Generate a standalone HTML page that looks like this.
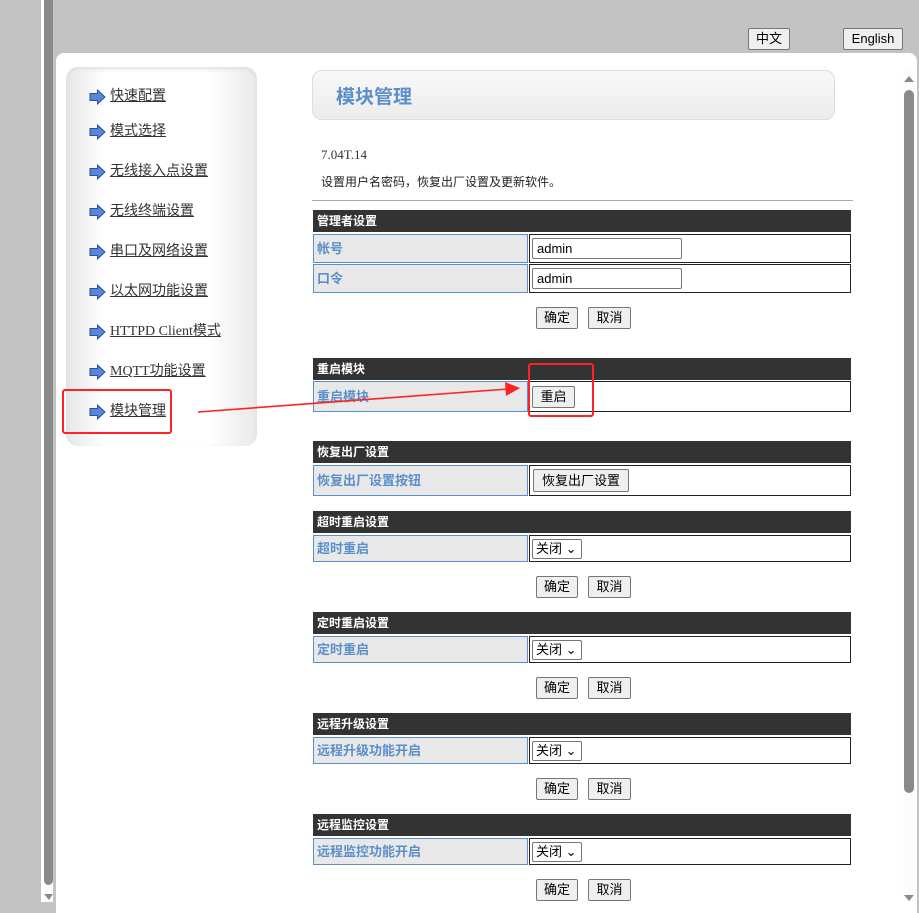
<!DOCTYPE html>
<html><head><meta charset="utf-8"><style>
*{margin:0;padding:0;box-sizing:border-box}
body{width:919px;height:902px;overflow:hidden;position:relative;background:#c3c3c3;font-family:"Liberation Sans","Noto Sans CJK SC",sans-serif;font-size:13px;color:#222}
.a{position:absolute}
.panel{left:56px;top:53px;width:861px;height:860px;background:#fff;border-radius:8px 8px 0 0}
.side{left:66px;top:67px;width:191px;height:379px;border-radius:12px;background:linear-gradient(90deg,#e6e6e6,#fff 20%,#fff 75%,#e9e9e9);box-shadow:inset 0 2px 4px #ddd}
.mi{position:absolute;left:89px;font-family:"Liberation Serif","Noto Sans CJK SC",serif;font-size:14px;color:#333;text-decoration:underline;line-height:18px}
.mi svg{position:absolute;left:0;top:1px}
.mi span{margin-left:21px}
.hd{left:313px;width:538px;height:22px;background:#333;color:#fff;font-weight:bold;font-size:12px;line-height:22px;padding-left:4px}
.lb{left:313px;width:215px;background:#e8e8e8;border:1px solid #5b8fc9;color:#5b8fc9;font-weight:bold;font-size:13px;padding-left:3px}
.vl{left:529px;width:322px;border:1px solid #222}
.btn{position:absolute;background:#efefef;border:1px solid #767676;border-radius:2px;font-size:13px;text-align:center;color:#000}
.inp{position:absolute;left:532px;width:150px;height:21px;border:1px solid #767676;border-radius:2px;font-size:13px;line-height:19px;padding-left:4px;color:#000}
.sel{position:absolute;left:532px;width:50px;height:20px;border:1px solid #767676;border-radius:2px;font-size:13px;line-height:18px;padding-left:3px;color:#000;background:#fff}
</style></head><body>
<div class="a" style="left:41px;top:0;width:3px;height:902px;background:#fff"></div>
<div class="a" style="left:44px;top:0;width:9px;height:902px;background:#fcfcfc"></div>
<div class="a" style="left:44px;top:0;width:9px;height:885px;background:#8a8a8a;border-radius:0 0 5px 5px"></div>
<div class="a" style="left:44px;top:894px;width:0;height:0;border-left:5px solid transparent;border-right:4px solid transparent;border-top:6px solid #8a8a8a"></div>
<div class="a panel"></div>
<div class="btn" style="left:748px;top:28px;width:42px;height:22px;line-height:20px">中文</div>
<div class="btn" style="left:843px;top:28px;width:60px;height:22px;line-height:20px">English</div>
<div class="a" style="left:903px;top:70px;width:13px;height:832px;background:#fcfcfc"></div>
<div class="a" style="left:904px;top:76px;width:0;height:0;border-left:5px solid transparent;border-right:5px solid transparent;border-bottom:6px solid #8a8a8a"></div>
<div class="a" style="left:904px;top:90px;width:10px;height:703px;background:#8a8a8a;border-radius:5px"></div>
<div class="a" style="left:904px;top:895px;width:0;height:0;border-left:5px solid transparent;border-right:5px solid transparent;border-top:6px solid #8a8a8a"></div>

<div class="a side"></div>
<svg width="0" height="0" style="position:absolute"><defs><symbol id="ar" viewBox="0 0 17 16"><path d="M1 4.5h7.5V1L16 8l-7.5 7v-3.5H1z" fill="#5a86d6" stroke="#2b4f9e" stroke-width="1"/></symbol></defs></svg>
<div class="mi" style="top:88px"><svg width="17" height="16"><use href="#ar"/></svg><span>快速配置</span></div>
<div class="mi" style="top:123px"><svg width="17" height="16"><use href="#ar"/></svg><span>模式选择</span></div>
<div class="mi" style="top:163px"><svg width="17" height="16"><use href="#ar"/></svg><span>无线接入点设置</span></div>
<div class="mi" style="top:203px"><svg width="17" height="16"><use href="#ar"/></svg><span>无线终端设置</span></div>
<div class="mi" style="top:243px"><svg width="17" height="16"><use href="#ar"/></svg><span>串口及网络设置</span></div>
<div class="mi" style="top:283px"><svg width="17" height="16"><use href="#ar"/></svg><span>以太网功能设置</span></div>
<div class="mi" style="top:323px"><svg width="17" height="16"><use href="#ar"/></svg><span>HTTPD Client模式</span></div>
<div class="mi" style="top:363px"><svg width="17" height="16"><use href="#ar"/></svg><span>MQTT功能设置</span></div>
<div class="mi" style="top:403px"><svg width="17" height="16"><use href="#ar"/></svg><span>模块管理</span></div>

<div class="a" style="left:312px;top:70px;width:523px;height:50px;border:1px solid #ddd;border-radius:10px;background:linear-gradient(#f8f8f8,#ececec)"></div>
<div class="a" style="left:336px;top:86px;font-size:19px;font-weight:bold;color:#5b8fc9;line-height:24px">模块管理</div>
<div class="a" style="left:321px;top:147px;font-family:'Liberation Serif',serif;font-size:13px;color:#333">7.04T.14</div>
<div class="a" style="left:321px;top:173px;font-size:12px;color:#222">设置用户名密码，恢复出厂设置及更新软件。</div>
<div class="a" style="left:312px;top:200px;width:541px;height:1px;background:#aaa"></div>

<div class="a hd" style="top:210px">管理者设置</div>
<div class="a lb" style="top:234px;height:29px;line-height:27px">帐号</div><div class="a vl" style="top:234px;height:29px"></div>
<div class="inp" style="top:238px">admin</div>
<div class="a lb" style="top:264px;height:29px;line-height:27px">口令</div><div class="a vl" style="top:264px;height:29px"></div>
<div class="inp" style="top:268px">admin</div>
<div class="btn" style="left:536px;top:307px;width:42px;height:22px;line-height:20px">确定</div>
<div class="btn" style="left:588px;top:307px;width:43px;height:22px;line-height:20px">取消</div>

<div class="a hd" style="top:358px">重启模块</div>
<div class="a lb" style="top:381px;height:31px;line-height:29px">重启模块</div><div class="a vl" style="top:381px;height:31px"></div>
<div class="btn" style="left:532px;top:386px;width:43px;height:22px;line-height:20px">重启</div>

<div class="a hd" style="top:441px">恢复出厂设置</div>
<div class="a lb" style="top:465px;height:31px;line-height:29px">恢复出厂设置按钮</div><div class="a vl" style="top:465px;height:31px"></div>
<div class="btn" style="left:533px;top:469px;width:96px;height:23px;line-height:21px">恢复出厂设置</div>

<div class="a hd" style="top:511px">超时重启设置</div>
<div class="a lb" style="top:535px;height:27px;line-height:25px">超时重启</div><div class="a vl" style="top:535px;height:27px"></div>
<div class="sel" style="top:539px">关闭 ⌄</div>
<div class="btn" style="left:536px;top:576px;width:42px;height:22px;line-height:20px">确定</div>
<div class="btn" style="left:588px;top:576px;width:43px;height:22px;line-height:20px">取消</div>

<div class="a hd" style="top:612px">定时重启设置</div>
<div class="a lb" style="top:636px;height:27px;line-height:25px">定时重启</div><div class="a vl" style="top:636px;height:27px"></div>
<div class="sel" style="top:640px">关闭 ⌄</div>
<div class="btn" style="left:536px;top:677px;width:42px;height:22px;line-height:20px">确定</div>
<div class="btn" style="left:588px;top:677px;width:43px;height:22px;line-height:20px">取消</div>

<div class="a hd" style="top:713px">远程升级设置</div>
<div class="a lb" style="top:737px;height:27px;line-height:25px">远程升级功能开启</div><div class="a vl" style="top:737px;height:27px"></div>
<div class="sel" style="top:741px">关闭 ⌄</div>
<div class="btn" style="left:536px;top:778px;width:42px;height:22px;line-height:20px">确定</div>
<div class="btn" style="left:588px;top:778px;width:43px;height:22px;line-height:20px">取消</div>

<div class="a hd" style="top:814px">远程监控设置</div>
<div class="a lb" style="top:838px;height:27px;line-height:25px">远程监控功能开启</div><div class="a vl" style="top:838px;height:27px"></div>
<div class="sel" style="top:842px">关闭 ⌄</div>
<div class="btn" style="left:536px;top:879px;width:42px;height:22px;line-height:20px">确定</div>
<div class="btn" style="left:588px;top:879px;width:43px;height:22px;line-height:20px">取消</div>

<div class="a" style="left:62px;top:389px;width:110px;height:45px;border:2px solid #f22;border-radius:3px"></div>
<div class="a" style="left:528px;top:363px;width:66px;height:54px;border:2px solid #f22;border-radius:3px"></div>
<svg class="a" style="left:0;top:0" width="919" height="902"><line x1="198" y1="412" x2="508" y2="389" stroke="#f22" stroke-width="1.6"/><path d="M505 382L520 388L506 396z" fill="#f22"/></svg>
</body></html>
